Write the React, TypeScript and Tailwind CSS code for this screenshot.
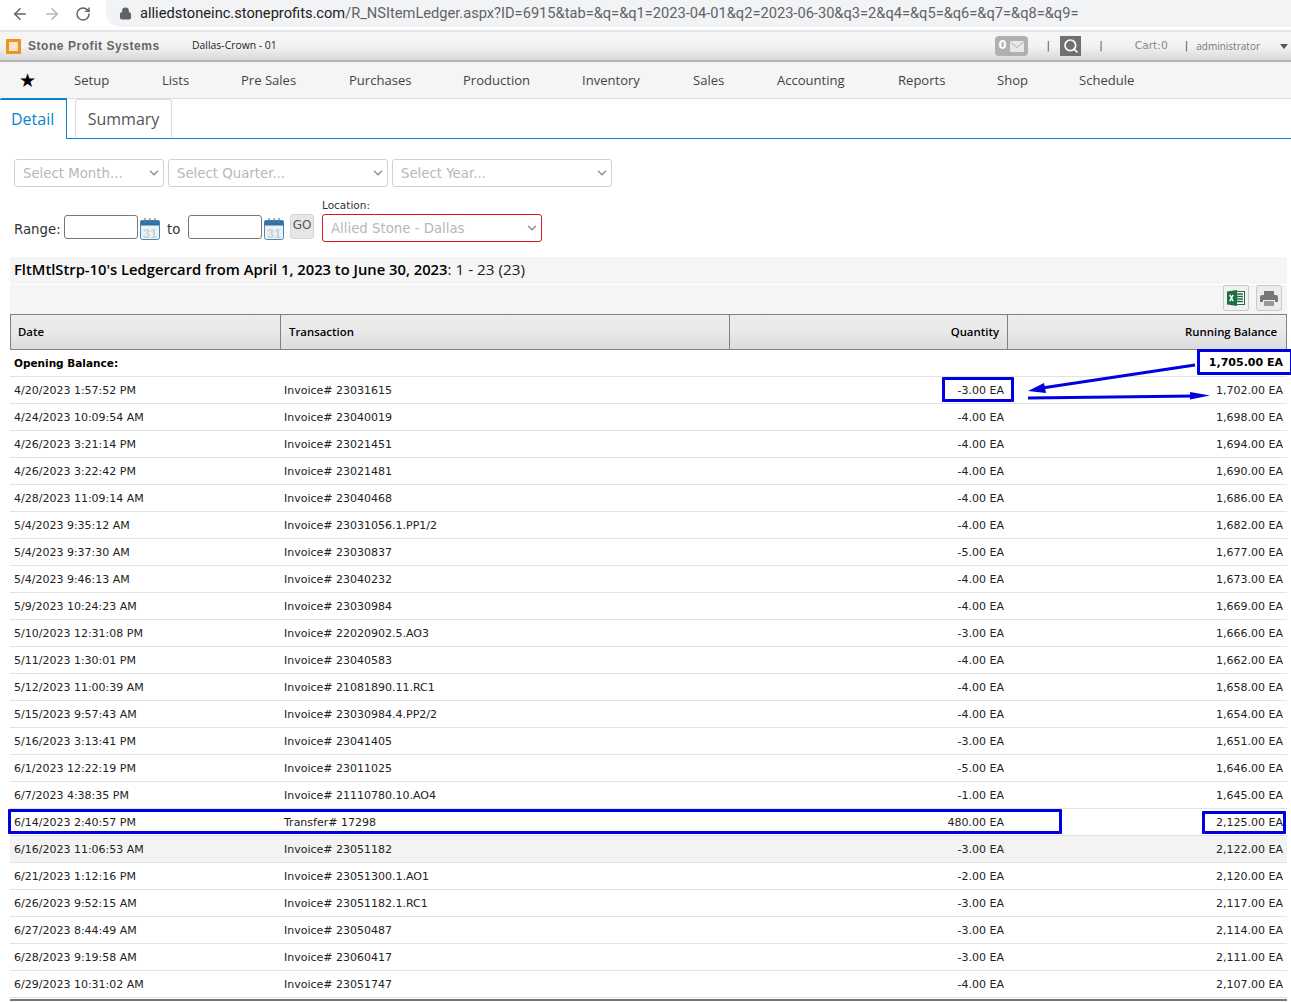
import React from "react";
import { ArrowLeft, ArrowRight, RotateCw, Lock, ChevronDown, Search } from "lucide-react";

const rows: [string, string, string, string][] = [
  ["4/20/2023 1:57:52 PM", "Invoice# 23031615", "-3.00 EA", "1,702.00 EA"],
  ["4/24/2023 10:09:54 AM", "Invoice# 23040019", "-4.00 EA", "1,698.00 EA"],
  ["4/26/2023 3:21:14 PM", "Invoice# 23021451", "-4.00 EA", "1,694.00 EA"],
  ["4/26/2023 3:22:42 PM", "Invoice# 23021481", "-4.00 EA", "1,690.00 EA"],
  ["4/28/2023 11:09:14 AM", "Invoice# 23040468", "-4.00 EA", "1,686.00 EA"],
  ["5/4/2023 9:35:12 AM", "Invoice# 23031056.1.PP1/2", "-4.00 EA", "1,682.00 EA"],
  ["5/4/2023 9:37:30 AM", "Invoice# 23030837", "-5.00 EA", "1,677.00 EA"],
  ["5/4/2023 9:46:13 AM", "Invoice# 23040232", "-4.00 EA", "1,673.00 EA"],
  ["5/9/2023 10:24:23 AM", "Invoice# 23030984", "-4.00 EA", "1,669.00 EA"],
  ["5/10/2023 12:31:08 PM", "Invoice# 22020902.5.AO3", "-3.00 EA", "1,666.00 EA"],
  ["5/11/2023 1:30:01 PM", "Invoice# 23040583", "-4.00 EA", "1,662.00 EA"],
  ["5/12/2023 11:00:39 AM", "Invoice# 21081890.11.RC1", "-4.00 EA", "1,658.00 EA"],
  ["5/15/2023 9:57:43 AM", "Invoice# 23030984.4.PP2/2", "-4.00 EA", "1,654.00 EA"],
  ["5/16/2023 3:13:41 PM", "Invoice# 23041405", "-3.00 EA", "1,651.00 EA"],
  ["6/1/2023 12:22:19 PM", "Invoice# 23011025", "-5.00 EA", "1,646.00 EA"],
  ["6/7/2023 4:38:35 PM", "Invoice# 21110780.10.AO4", "-1.00 EA", "1,645.00 EA"],
  ["6/14/2023 2:40:57 PM", "Transfer# 17298", "480.00 EA", "2,125.00 EA"],
  ["6/16/2023 11:06:53 AM", "Invoice# 23051182", "-3.00 EA", "2,122.00 EA"],
  ["6/21/2023 1:12:16 PM", "Invoice# 23051300.1.AO1", "-2.00 EA", "2,120.00 EA"],
  ["6/26/2023 9:52:15 AM", "Invoice# 23051182.1.RC1", "-3.00 EA", "2,117.00 EA"],
  ["6/27/2023 8:44:49 AM", "Invoice# 23050487", "-3.00 EA", "2,114.00 EA"],
  ["6/28/2023 9:19:58 AM", "Invoice# 23060417", "-3.00 EA", "2,111.00 EA"],
  ["6/29/2023 10:31:02 AM", "Invoice# 23051747", "-4.00 EA", "2,107.00 EA"],
];

const nav: [string, string][] = [
  ["Setup", "w-[88px]"],
  ["Lists", "w-[79px]"],
  ["Pre Sales", "w-[108px]"],
  ["Purchases", "w-[114px]"],
  ["Production", "w-[119px]"],
  ["Inventory", "w-[111px]"],
  ["Sales", "w-[84px]"],
  ["Accounting", "w-[121px]"],
  ["Reports", "w-[99px]"],
  ["Shop", "w-[82px]"],
  ["Schedule", "w-[90px]"],
];

const Cal = () => (
  <svg width="21" height="22" viewBox="0 0 21 22" className="shrink-0">
    <rect x="0.5" y="2.5" width="19" height="19" rx="2" fill="#eef2f5" stroke="#4a86b5" />
    <rect x="0.5" y="2.5" width="19" height="5" fill="#2f72a8" />
    <path d="M5 0v5M10 0v5M15 0v5" stroke="#5a7f9c" strokeWidth="1.2" />
    <text x="10" y="19.5" textAnchor="middle" fontSize="13" fontWeight="700" fill="#c9d2d8" fontFamily="'Liberation Sans', sans-serif">31</text>
  </svg>
);

const Sel = ({ label, w, red }: { label: string; w: string; red?: boolean }) => (
  <div className={`${w} h-[28px] ${red ? "border-[#e0141c]" : "border-[#cfd2d4]"} flex items-center justify-between border rounded-[3px] bg-white pl-[8px] pr-[2px] text-[13.3px] text-[#b4b8bc]`}>
    <span className="pt-[2px]">{label}</span>
    <ChevronDown size={14} strokeWidth={2.5} className="text-[#8d9296]" />
  </div>
);

const ExcelIcon = () => (
  <svg width="18" height="16" viewBox="0 0 18 16">
    <rect x="7" y="1.5" width="10.5" height="13" fill="#fff" stroke="#1d7044" />
    <path d="M9 4h7M9 6.5h7M9 9h7M9 11.5h7" stroke="#1d7044" strokeWidth="1.4" />
    <path d="M0 1.5L10 0v16L0 14.5z" fill="#1d7044" />
    <path d="M2.8 4.8l3.4 6.4M6.2 4.8l-3.4 6.4" stroke="#fff" strokeWidth="1.5" />
  </svg>
);

const PrintIcon = () => (
  <svg width="18" height="15" viewBox="0 0 18 15">
    <path d="M4 0h10v4H4z" fill="#777" />
    <path d="M2 4h14a2 2 0 0 1 2 2v5h-3V9H3v2H0V6a2 2 0 0 1 2-2z" fill="#777" />
    <path d="M4 10h10v5H4z" fill="#999" />
  </svg>
);

const Envelope = () => (
  <svg width="14" height="11" viewBox="0 0 14 11">
    <rect x="0" y="0" width="14" height="11" rx="1" fill="#e8e8e8" />
    <path d="M0.5 1L7 6.5L13.5 1" stroke="#b0b0b0" strokeWidth="1" fill="none" />
  </svg>
);

const BlueBox = ({ className }: { className: string }) => (
  <div className={`absolute border-[3px] border-[#0000e0] rounded-[1px] pointer-events-none ${className}`} />
);

export default function App() {
  return (
    <div className="relative w-[1291px] h-[1002px] overflow-hidden bg-white text-[#222] font-['DejaVu_Sans',sans-serif]">
      {/* browser bar */}
      <div className="h-[32px] flex items-start border-b-2 border-[#e4e5e6] bg-white">
        <div className="flex items-center h-[27px] text-[#5f6368] pl-[11px] w-[106px] shrink-0 gap-[14px]">
          <ArrowLeft size={18} strokeWidth={2} />
          <ArrowRight size={18} strokeWidth={2} className="text-[#b3b5b8]" />
          <RotateCw size={16} strokeWidth={2.2} />
        </div>
        <div className="flex-1 h-[27px] rounded-bl-[14px] bg-[#f1f3f4] flex items-center pl-[13px] font-['Roboto',sans-serif] text-[14.65px] text-[#5f6368]">
          <Lock size={13} strokeWidth={2.5} className="mr-[8px] text-[#5f6368] fill-[#5f6368]" />
          <span>
            <span className="text-[#202124]">alliedstoneinc.stoneprofits.com</span>/R_NSItemLedger.aspx?ID=6915&amp;tab=&amp;q=&amp;q1=2023-04-01&amp;q2=2023-06-30&amp;q3=2&amp;q4=&amp;q5=&amp;q6=&amp;q7=&amp;q8=&amp;q9=
          </span>
        </div>
      </div>

      {/* app header */}
      <div className="h-[30px] flex items-center border-b-2 border-[#b4b4b4] bg-gradient-to-b from-[#f6f6f6] via-[#f3f3f3] to-[#d9d9d9] text-[10.5px]">
        <div className="ml-[6px] w-[15px] h-[15px] border-[3px] border-[#f0921e] bg-[#f7e6cf] rounded-[1px]" />
        <span className="ml-[7px] w-[164px] font-['Liberation_Sans',sans-serif] font-bold text-[12px] tracking-[0.55px] text-[#666]">Stone Profit Systems</span>
        <span className="text-[10.4px] text-[#222] font-['Open_Sans',sans-serif]">Dallas-Crown - 01</span>
        <div className="ml-auto flex items-center text-[#777]">
          <div className="w-[33px] h-[20px] rounded-[4px] bg-[#b0b0b0] flex items-center justify-center gap-[3px] text-white font-bold text-[11.5px]">
            <span>0</span>
            <Envelope />
          </div>
          <span className="ml-[19px] text-[#555]">|</span>
          <div className="ml-[10px] w-[21px] h-[20px] bg-[#707070] flex items-center justify-center">
            <Search size={16} strokeWidth={2.5} className="text-white" />
          </div>
          <span className="ml-[18px] text-[#555]">|</span>
          <span className="ml-[32px] text-[10.7px] text-[#888]">Cart:0</span>
          <span className="ml-[17px] text-[#555]">|</span>
          <span className="ml-[8px] text-[10px] text-[#777] font-['Open_Sans',sans-serif]">administrator</span>
          <span className="ml-[20px] mr-[3px] w-0 h-0 border-x-[4px] border-x-transparent border-t-[5px] border-t-[#555]" />
        </div>
      </div>

      {/* nav */}
      <div className="h-[37px] flex items-center pt-[1px] bg-[#f5f5f5] border-b border-[#dedede] text-[13.05px] text-[#444] font-['Open_Sans',sans-serif]">
        <div className="w-[74px] pl-[19px] shrink-0 text-[19px] leading-none text-black font-['DejaVu_Sans',sans-serif]">★</div>
        {nav.map(([n, w]) => (
          <span key={n} className={`${w} shrink-0`}>{n}</span>
        ))}
      </div>

      {/* tabs */}
      <div className="h-[41px] flex items-end border-b border-[#0a84d0] -mt-[1px] text-[16px] font-['Open_Sans',sans-serif]">
        <div className="w-[67px] h-[41px] -mb-[1px] pb-[2px] bg-white border-t-2 border-r border-[#0a84d0] rounded-tl-[2px] flex items-center pl-[11px] text-[#0a84d0]">Detail</div>
        <div className="ml-[8px] w-[97px] h-[39px] border border-b-0 border-[#dcdcdc] rounded-t-[3px] flex items-center justify-center text-[#555]">Summary</div>
      </div>

      {/* month / quarter / year */}
      <div className="ml-[14px] mt-[20px] flex gap-[4px]">
        <Sel label="Select Month..." w="w-[150px]" />
        <Sel label="Select Quarter..." w="w-[220px]" />
        <Sel label="Select Year..." w="w-[220px]" />
      </div>

      {/* range */}
      <div className="ml-[14px] mt-[10px] h-[45px] flex items-end text-[13.3px]">
        <span className="mb-[2px] w-[50px] text-[#333]">Range:</span>
        <div className="mb-[3px] w-[74px] h-[24px] border border-[#777] rounded-[3px]" />
        <div className="mb-[2px] ml-[2px]"><Cal /></div>
        <span className="mb-[2px] ml-[6px] w-[21px] text-[#333]">to</span>
        <div className="mb-[3px] w-[74px] h-[24px] border border-[#777] rounded-[3px]" />
        <div className="mb-[2px] ml-[2px]"><Cal /></div>
        <div className="mb-[3px] ml-[5px] w-[24px] h-[25px] border border-[#d4d6d8] rounded-[3px] bg-[#e4e6e8] text-[12px] text-[#555] flex items-center justify-center pb-[3px]">GO</div>
        <div className="ml-[8px] flex flex-col">
          <span className="text-[10.5px] text-[#333] mb-[2px] leading-[14px]">Location:</span>
          <Sel label="Allied Stone - Dallas" w="w-[220px]" red />
        </div>
      </div>

      {/* title */}
      <div className="ml-[10px] mr-[4px] mt-[15px] h-[27px] pb-[2px] bg-[#f5f5f5] flex items-center pl-[4px] text-[14.75px] text-[#222] font-['Open_Sans',sans-serif]">
        <span className="font-semibold text-black">FltMtlStrp-10's Ledgercard from April 1, 2023 to June 30, 2023</span>
        <span className="text-[15.3px]">: 1 - 23 (23)</span>
      </div>
      <div className="ml-[10px] mr-[4px] mt-[1px] h-[29px] bg-[#f5f5f5] flex justify-end items-start pr-[5px] gap-[7px]">
        <div className="w-[26px] h-[26px] border border-[#c9c9c9] rounded-[2px] bg-[#f1f1f1] flex items-center justify-center"><ExcelIcon /></div>
        <div className="w-[26px] h-[26px] border border-[#c9c9c9] rounded-[3px] bg-[#ececec] flex items-center justify-center"><PrintIcon /></div>
      </div>

      {/* table */}
      <div className="ml-[10px] mr-[4px] text-[11px] text-[#222]">
        <div className="h-[36px] grid grid-cols-[270px_449px_278px_1fr] border-y border-[#808080] border-r bg-gradient-to-b from-[#ededed] via-[#e9e9e9] to-[#dcdcdc] text-[11.4px] text-black font-['Open_Sans',sans-serif] font-semibold">
          <div className="flex items-center pl-[7px] border-l border-[#808080]">Date</div>
          <div className="flex items-center pl-[8px] border-l border-[#808080]">Transaction</div>
          <div className="flex items-center justify-end pr-[8px] border-l border-[#808080]">Quantity</div>
          <div className="flex items-center justify-end pr-[9px] border-l border-[#808080]">Running Balance</div>
        </div>
        <div className="h-[27px] pt-[1px] flex items-center justify-between border-b border-[#e2e2e2] px-[4px] font-bold text-black">
          <span className="text-[10.5px]">Opening Balance:</span>
          <span>1,705.00 EA</span>
        </div>
        {rows.map((r, i) => (
          <div key={i} className={`h-[27px] pt-[2px] grid grid-cols-[270px_448px_272px_1fr] items-center border-b border-[#e2e2e2] px-[4px] ${i === 17 ? "bg-[#f3f3f3]" : ""}`}>
            <span>{r[0]}</span>
            <span>{r[1]}</span>
            <span className="text-right">{r[2]}</span>
            <span className="text-right">{r[3]}</span>
          </div>
        ))}
        <div className="mt-[1px] h-[2px] bg-[#777]" />
      </div>

      {/* annotations */}
      <BlueBox className="left-[1197px] top-[349px] w-[96px] h-[26px]" />
      <BlueBox className="left-[942px] top-[377px] w-[72px] h-[25px]" />
      <BlueBox className="left-[8px] top-[809px] w-[1054px] h-[25px]" />
      <BlueBox className="left-[1202px] top-[811px] w-[84px] h-[23px]" />
      <svg className="absolute left-[1020px] top-[360px] pointer-events-none" width="200" height="45" viewBox="0 0 200 45">
        <path d="M175 5L22 28" stroke="#0000e0" strokeWidth="3" fill="none" />
        <path d="M8 31L24 23L26 33z" fill="#0000e0" />
        <path d="M8 38L175 36" stroke="#0000e0" strokeWidth="3" fill="none" />
        <path d="M190 35.5L170 32L170 39.5z" fill="#0000e0" />
      </svg>
    </div>
  );
}
